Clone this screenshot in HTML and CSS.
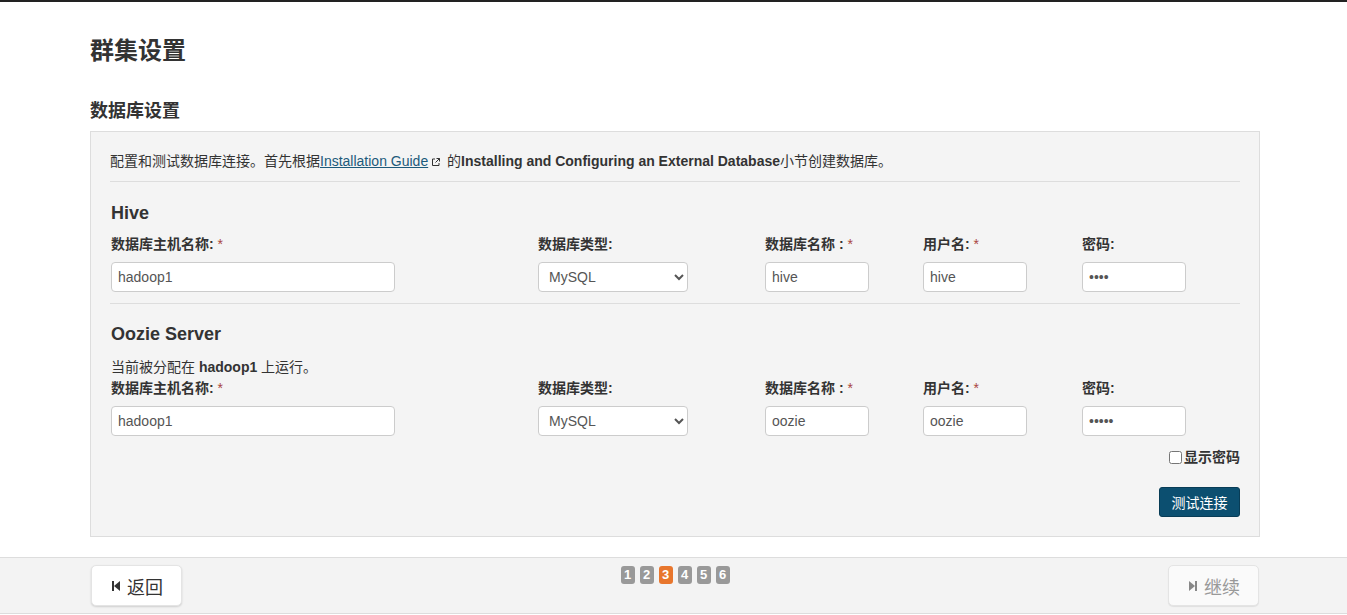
FILE: index.html
```html
<!DOCTYPE html>
<html lang="zh">
<head>
<meta charset="utf-8">
<title>群集设置</title>
<link rel="stylesheet" href="styles.css">
</head>
<body>
<div class="topbar"></div>
<div class="container">
  <h1 class="page-title">群集设置</h1>
  <h2 class="section-title">数据库设置</h2>
  <div class="panel">
    <p class="intro">配置和测试数据库连接。首先根据<a href="#" class="link">Installation Guide</a><svg class="ext" width="10" height="10" viewBox="0 0 10 10"><path d="M4 2H1.5v6.5H8V6" fill="none" stroke="#333" stroke-width="1"/><path d="M5.5 1.5H8.5V4.5M8.5 1.5L4.5 5.5" fill="none" stroke="#333" stroke-width="1"/></svg> 的<b>Installing and Configuring an External Database</b>小节创建数据库。</p>
    <div class="rule"></div>

    <h3 class="service">Hive</h3>
    <div class="fields">
      <div class="field"><label>数据库主机名称: <span class="req">*</span></label><input class="in in-host" type="text" value="hadoop1"></div>
      <div class="field"><label>数据库类型:</label><select class="in in-sel"><option>MySQL</option></select></div>
      <div class="field"><label>数据库名称 : <span class="req">*</span></label><input class="in in-sm" type="text" value="hive"></div>
      <div class="field"><label>用户名: <span class="req">*</span></label><input class="in in-sm" type="text" value="hive"></div>
      <div class="field"><label>密码:</label><input class="in in-sm" type="password" value="hive"></div>
    </div>
    <div class="rule rule-mid"></div>

    <h3 class="service">Oozie Server</h3>
    <p class="note">当前被分配在 <b>hadoop1</b> 上运行。</p>
    <div class="fields fields-tight">
      <div class="field"><label>数据库主机名称: <span class="req">*</span></label><input class="in in-host" type="text" value="hadoop1"></div>
      <div class="field"><label>数据库类型:</label><select class="in in-sel"><option>MySQL</option></select></div>
      <div class="field"><label>数据库名称 : <span class="req">*</span></label><input class="in in-sm" type="text" value="oozie"></div>
      <div class="field"><label>用户名: <span class="req">*</span></label><input class="in in-sm" type="text" value="oozie"></div>
      <div class="field"><label>密码:</label><input class="in in-sm" type="password" value="oozie"></div>
    </div>

    <div class="show-pw"><label class="check"><input type="checkbox" class="cb">显示密码</label></div>
    <div class="actions"><button class="btn-test" type="button">测试连接</button></div>
  </div>
</div>

<div class="footer">
  <div class="footer-inner">
    <button class="nav-btn" type="button"><svg width="8" height="10" viewBox="0 0 8 10"><rect x="0" y="0" width="2" height="10" fill="#333"/><path d="M8 0V10L2 5Z" fill="#333"/></svg>返回</button>
    <div class="steps">
      <span class="step">1</span><span class="step">2</span><span class="step active">3</span><span class="step">4</span><span class="step">5</span><span class="step">6</span>
    </div>
    <button class="nav-btn disabled" type="button"><svg width="8" height="10" viewBox="0 0 8 10"><path d="M0 0V10L6 5Z" fill="#888"/><rect x="6" y="0" width="2" height="10" fill="#888"/></svg>继续</button>
  </div>
</div>
</body>
</html>
```
FILE: styles.css
```css
* { box-sizing: border-box; }
html, body { margin: 0; padding: 0; }
body {
  font-family: "Liberation Sans", Arial, "Noto Sans CJK SC", sans-serif;
  font-size: 14px;
  color: #333;
  background: #fff;
  overflow: hidden;
}
.topbar { height: 2px; background: #222; }
.container { width: 1170px; margin: 0 0 0 90px; }
.page-title {
  margin: 36px 0 0;
  font-size: 24px;
  line-height: 26px;
  font-weight: bold;
  color: #333;
}
.section-title {
  margin: 37px 0 10px;
  font-size: 18px;
  line-height: 20px;
  font-weight: bold;
}
.panel {
  background: #f4f4f4;
  border: 1px solid #ddd;
  padding: 19px 19px 19px;
}
.intro { margin: 0; line-height: 20px; font-size: 14px; }
.link { color: #1c5a7b; text-decoration: underline; }
.ext { margin: 0 2px 0 3px; vertical-align: -1px; }
.rule { height: 1px; background: #ddd; margin: 10px 0 0; }
.rule-mid { margin-top: 11px; }
.service {
  margin: 21px 0 0;
  font-size: 18px;
  line-height: 20px;
  font-weight: bold;
  padding-left: 1px;
}
.rule-mid + .service { margin-top: 20px; }
.note { margin: 13px 0 0; line-height: 20px; padding-left: 1px; }
.fields {
  display: grid;
  grid-template-columns: 427px 227px 158px 159px 1fr;
  margin-top: 11px;
}
.fields-tight { margin-top: 1px; }
.field { display: flex; flex-direction: column; align-items: flex-start; padding-left: 1px; }
.field label {
  font-weight: bold;
  line-height: 20px;
  margin-bottom: 8px;
  white-space: nowrap;
}
.req { color: #a94442; font-weight: normal; }
.in {
  height: 30px;
  border: 1px solid #ccc;
  border-radius: 4px;
  background: #fff;
  font-family: "Liberation Sans", Arial, sans-serif;
  font-size: 14px;
  color: #555;
  padding: 4px 6px;
  margin: 0;
}
.in-host { width: 284px; }
.in-sel { width: 150px; padding: 4px 6px; }
.in-sm { width: 104px; }
.show-pw {
  display: flex;
  justify-content: flex-end;
  margin-top: 11px;
  line-height: 20px;
}
.check { display: flex; align-items: center; font-weight: bold; }
.cb { width: 13px; height: 13px; margin: 0 2px 0 0; }
.actions { display: flex; justify-content: flex-end; margin-top: 20px; }
.btn-test {
  height: 30px;
  width: 81px;
  background: #0c4f70;
  border: 1px solid #083c56;
  border-radius: 3px;
  color: #fff;
  font-family: "Liberation Sans", Arial, "Noto Sans CJK SC", sans-serif;
  font-size: 14px;
  padding: 0;
}
.footer {
  margin-top: 20px;
  background: #f3f3f3;
  border-top: 1px solid #ddd;
  border-bottom: 1px solid #ddd;
  height: 57px;
}
.footer-inner {
  width: 1170px;
  margin: 0 0 0 90px;
  display: flex;
  justify-content: space-between;
  align-items: flex-start;
  padding: 7px 1px 0;
}
.nav-btn {
  width: 91px;
  height: 41px;
  background: #fff;
  border: 1px solid #e4e4e4;
  border-radius: 5px;
  box-shadow: 0 1px 2px rgba(0,0,0,0.15);
  font-family: "Liberation Sans", Arial, "Noto Sans CJK SC", sans-serif;
  font-size: 18px;
  color: #333;
  display: flex;
  align-items: center;
  justify-content: center;
  gap: 7px;
  padding: 0 0 0 2px;
}
.nav-btn.disabled { background: #fafafa; color: #999; box-shadow: 0 1px 1px rgba(0,0,0,0.08); }
.steps { display: flex; gap: 5px; margin-top: 1px; }
.step {
  width: 14px;
  height: 18px;
  border-radius: 3px;
  background: #999;
  color: #fff;
  font-weight: bold;
  font-size: 13px;
  line-height: 18px;
  text-align: center;
}
.step.active { background: #e8762d; }
```
